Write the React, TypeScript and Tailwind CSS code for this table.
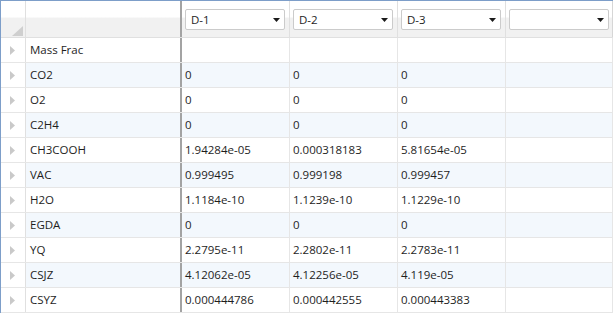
const rows: [string, string, string, string][] = [
  ['Mass Frac', '', '', ''],
  ['CO2', '0', '0', '0'],
  ['O2', '0', '0', '0'],
  ['C2H4', '0', '0', '0'],
  ['CH3COOH', '1.94284e-05', '0.000318183', '5.81654e-05'],
  ['VAC', '0.999495', '0.999198', '0.999457'],
  ['H2O', '1.1184e-10', '1.1239e-10', '1.1229e-10'],
  ['EGDA', '0', '0', '0'],
  ['YQ', '2.2795e-11', '2.2802e-11', '2.2783e-11'],
  ['CSJZ', '4.12062e-05', '4.12256e-05', '4.119e-05'],
  ['CSYZ', '0.000444786', '0.000442555', '0.000443383'],
];

const Caret = () => (
  <svg width="7" height="4" viewBox="0 0 7 4" className="shrink-0">
    <path d="M0 0H7L3.5 4Z" fill="#1a1a1a" />
  </svg>
);

const Dropdown = ({ label }: { label: string }) => (
  <div className="flex h-[21px] w-[100px] items-center justify-between rounded-[2px] border border-[#cbcbcb] bg-white pl-[5px] pr-[4px] text-[#1e1e1e]">
    <span>{label}</span>
    <Caret />
  </div>
);

const RowArrow = () => (
  <svg width="5" height="9" viewBox="0 0 5 9">
    <path d="M0 0L5 4.5L0 9Z" fill="#c9c9c9" />
  </svg>
);

export default function App() {
  const cols = 'grid grid-cols-[25px_156px_108px_108px_108px_107px]';

  return (
    <div
      className="h-[313px] w-[613px] overflow-hidden border-l border-t border-[#7d9ec9] bg-white text-[11.5px] text-[#1e1e1e]"
      style={{ fontFamily: '"Segoe UI", "Open Sans", sans-serif' }}
    >
      {/* header */}
      <div className={`${cols} h-[37px] border-b border-[#e0e0e0] bg-[linear-gradient(#ffffff_0%,#ffffff_44%,#f1f1f1_48%,#f1f1f1_100%)]`}>
        <div className="relative border-r border-[#e0e0e0]">
          <svg width="11" height="10" viewBox="0 0 11 10" className="absolute left-[11px] top-[25px]">
            <path d="M11 0V10H0Z" fill="#cfcfcf" />
          </svg>
        </div>
        <div className="border-r-2 border-[#a3a3a3]" />
        {['D-1', 'D-2', 'D-3', ''].map((d, i) => (
          <div key={i} className={`flex items-start pl-[3px] pt-[8px] ${i < 3 ? 'border-r border-[#e0e0e0]' : 'border-r border-[#d6d6d6]'}`}>
            <Dropdown label={d} />
          </div>
        ))}
      </div>

      {/* body */}
      {rows.map((r, ri) => {
        const alt = ri % 2 === 1;
        return (
          <div key={r[0]} className={`${cols} h-[25px] border-b border-[#e6e6e6] ${alt ? 'bg-[#f3f8fd]' : 'bg-white'}`}>
            <div className="flex items-center border-r border-[#e0e0e0] bg-white pl-[9px]">
              <RowArrow />
            </div>
            <div className="flex items-center border-r-2 border-[#a3a3a3] pl-[4px]">{r[0]}</div>
            {[r[1], r[2], r[3], ''].map((v, ci) => (
              <div key={ci} className="flex items-center border-r border-[#e6e6e6] pl-[3px]">
                {v}
              </div>
            ))}
          </div>
        );
      })}
    </div>
  );
}
